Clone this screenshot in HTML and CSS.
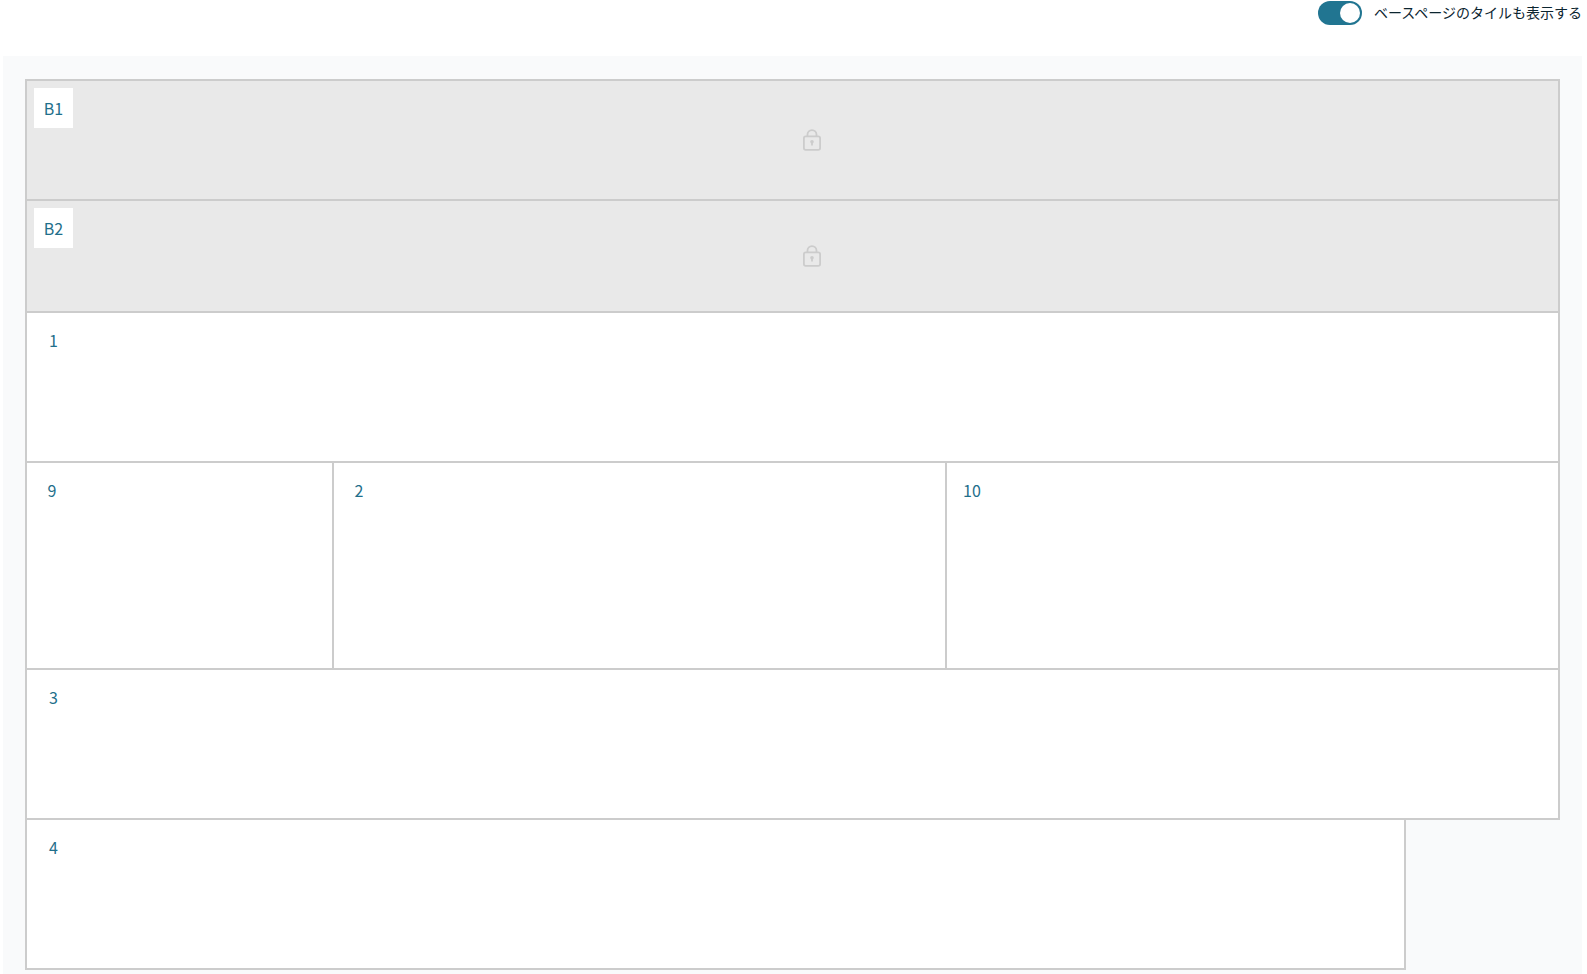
FILE: index.html
```html
<!DOCTYPE html>
<html lang="ja">

<head>
    <meta charset="UTF-8">
    <meta name="viewport" content="width=device-width, initial-scale=1.0">
    <title>レイアウト</title>
    <link rel="stylesheet" href="styles.css">
</head>

<body>
    <div class="toolbar">
        <span class="switch"><span class="knob"></span></span>
        <span class="switch-label">ベースページのタイルも表示する</span>
    </div>

    <div class="canvas">
        <div class="row row-base row-b1">
            <div class="tile">
                <span class="tile-label">B1</span>
                <div class="lock-area">
                    <svg class="lock" viewBox="0 0 20 24" fill="none" stroke="#cccccc" stroke-width="2">
                        <rect x="1" y="8" width="18" height="15" rx="2"/>
                        <path d="M5 8V6a5 5 0 0 1 10 0v2"/>
                        <circle cx="10" cy="14" r="2" fill="#cccccc" stroke="none"/>
                        <path d="M10 14v4"/>
                    </svg>
                </div>
            </div>
        </div>
        <div class="row row-base row-b2">
            <div class="tile">
                <span class="tile-label">B2</span>
                <div class="lock-area">
                    <svg class="lock" viewBox="0 0 20 24" fill="none" stroke="#cccccc" stroke-width="2">
                        <rect x="1" y="8" width="18" height="15" rx="2"/>
                        <path d="M5 8V6a5 5 0 0 1 10 0v2"/>
                        <circle cx="10" cy="14" r="2" fill="#cccccc" stroke="none"/>
                        <path d="M10 14v4"/>
                    </svg>
                </div>
            </div>
        </div>
        <div class="row row-single">
            <div class="tile"><span class="tile-label">1</span></div>
        </div>
        <div class="row row-triple">
            <div class="tile"><span class="tile-label">9</span></div>
            <div class="tile"><span class="tile-label">2</span></div>
            <div class="tile"><span class="tile-label">10</span></div>
        </div>
        <div class="row row-single">
            <div class="tile"><span class="tile-label">3</span></div>
        </div>
        <div class="row row-single row-short">
            <div class="tile"><span class="tile-label">4</span></div>
        </div>
    </div>
</body>

</html>
```

FILE: styles.css
```css
html,
body {
    height: 100%;
}

body {
    margin: 0;
    overflow: hidden;
    background: #fff;
    font-family: "Noto Sans CJK JP", "Noto Sans", sans-serif;
    color: #0b2530;
}

.toolbar {
    display: flex;
    justify-content: flex-end;
    align-items: center;
    gap: 12px;
    height: 26px;
    padding-right: 5px;
}

.switch {
    display: flex;
    justify-content: flex-end;
    align-items: center;
    box-sizing: border-box;
    width: 44px;
    height: 24px;
    padding-right: 2px;
    border-radius: 12px;
    background: #217591;
}

.knob {
    width: 20px;
    height: 20px;
    border-radius: 50%;
    background: #fff;
}

.switch-label {
    align-self: flex-start;
    font-size: 14px;
    line-height: 26px;
    margin-top: -1px;
}

.canvas {
    box-sizing: border-box;
    height: 918px;
    margin: 30px 5px 0 3px;
    padding: 23px 22px 0 22px;
    background: #f9fafb;
}

.row {
    display: flex;
    height: 148px;
    border: 2px solid #cccccc;
    border-top: 0;
    background: #fff;
}

.row:first-child {
    border-top: 2px solid #cccccc;
}

.row-base {
    background: #e9e9e9;
}

.row-b1 {
    height: 118px;
}

.row-b2 {
    height: 110px;
}

.row-triple {
    display: grid;
    grid-template-columns: 307px 613px 1fr;
    height: 205px;
}

.row-triple .tile:not(:last-child) {
    border-right: 2px solid #cccccc;
}

.row-triple .tile-label {
    min-width: 36px;
}

.row-short {
    width: 1381px;
    box-sizing: border-box;
    height: 150px;
}

.tile {
    display: flex;
    flex: 1;
    min-width: 0;
}

.tile-label {
    flex: none;
    box-sizing: border-box;
    min-width: 39px;
    height: 40px;
    margin: 7px 0 0 7px;
    text-align: center;
    font-size: 16px;
    line-height: 40px;
    color: #1f6f8b;
}

.row-base .tile-label {
    background: #fff;
}

.lock-area {
    flex: 1;
    display: flex;
    justify-content: center;
    align-items: center;
    margin-left: -7px;
}

.lock {
    width: 18px;
    height: 22px;
}
```
